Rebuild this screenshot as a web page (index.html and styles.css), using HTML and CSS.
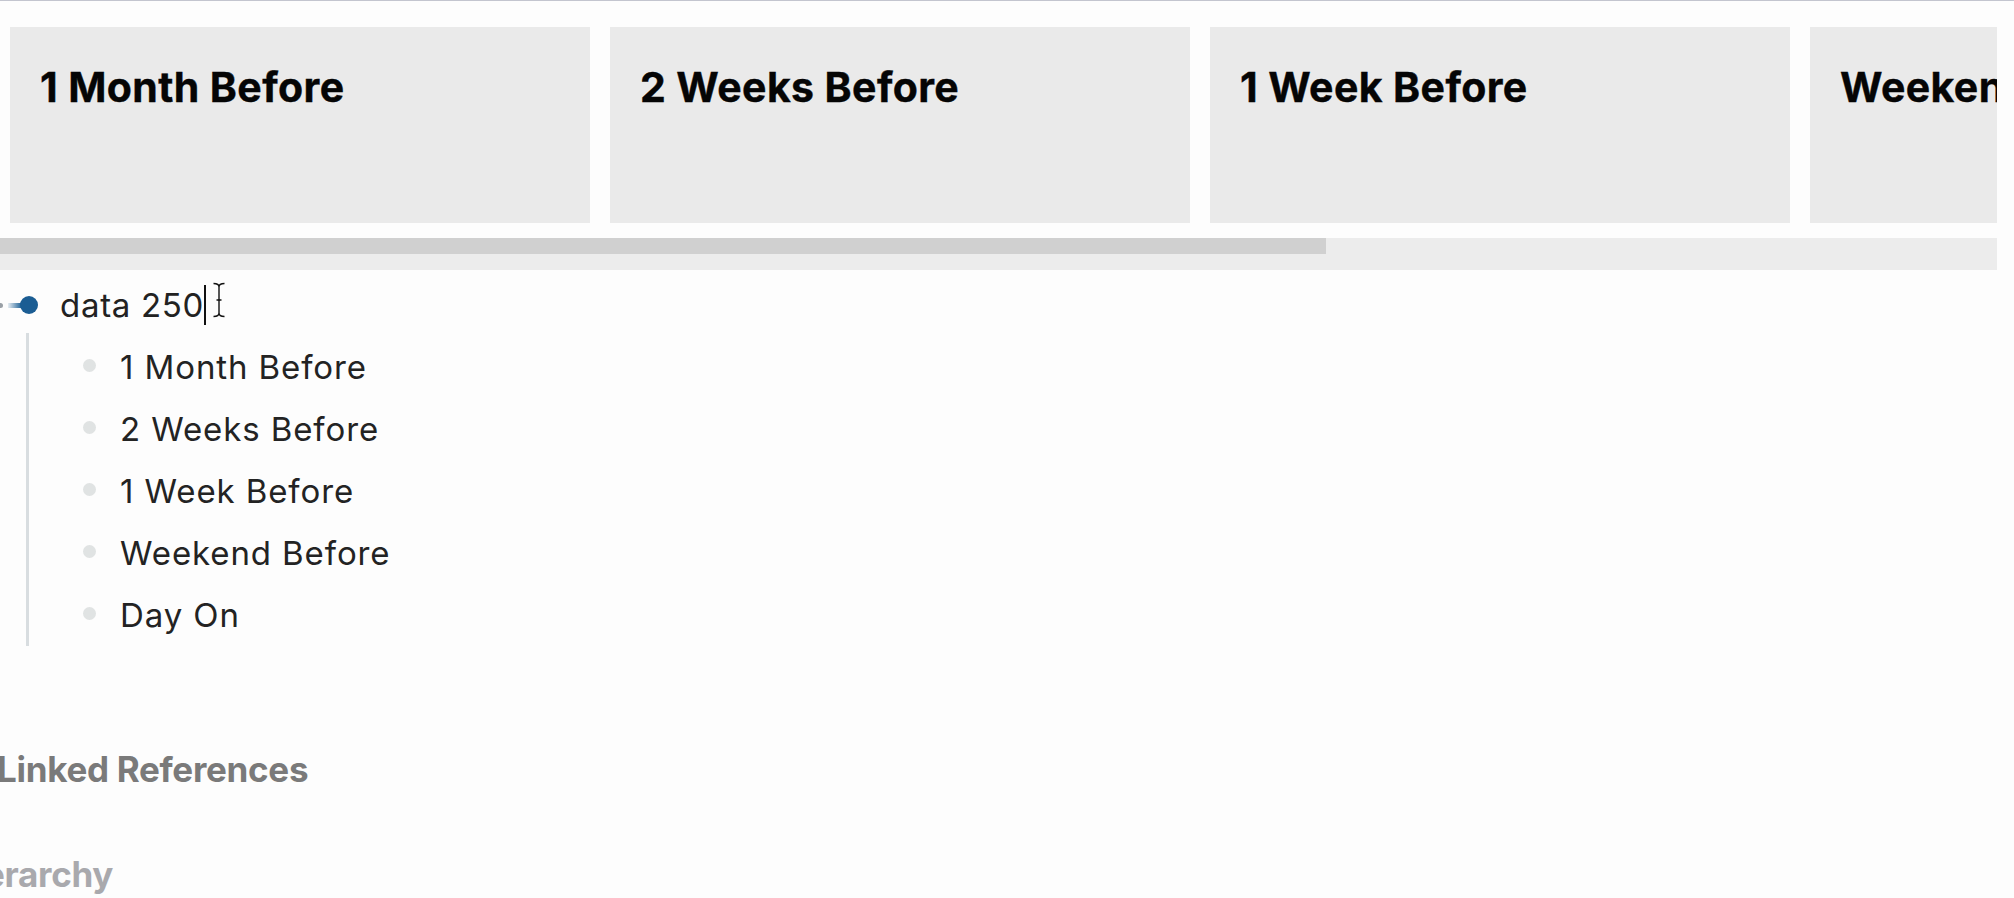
FILE: index.html
```html
<!DOCTYPE html>
<html>
<head>
<meta charset="utf-8">
<link rel="stylesheet" href="styles.css">
</head>
<body>
<div class="page">
  <div class="board">
    <div class="card"><h2 class="card-title">1 Month Before</h2></div>
    <div class="card"><h2 class="card-title">2 Weeks Before</h2></div>
    <div class="card"><h2 class="card-title">1 Week Before</h2></div>
    <div class="card"><h2 class="card-title">Weekend Before</h2></div>
    <div class="card"><h2 class="card-title">Day On</h2></div>
  </div>
  <div class="scrolltrack"><div class="scrollthumb"></div></div>

  <div class="outline">
    <div class="block-row">
      <div class="main-bullet">
        <span class="prev-dot"></span>
        <span class="tail"></span>
        <span class="dot"></span>
      </div>
      <div class="block-text">data 250<span class="caret"></span><svg class="ibeam" width="14" height="36" viewBox="0 0 14 36"><path d="M1.5 1.5 C5 1.5 7 2.5 7 5 C7 2.5 9 1.5 12.5 1.5 M7 5 V31 M1.5 34.5 C5 34.5 7 33.5 7 31 C7 33.5 9 34.5 12.5 34.5 M4.5 18 H9.5" fill="none" stroke="#fff" stroke-width="3.2"/><path d="M1.5 1.5 C5 1.5 7 2.5 7 5 C7 2.5 9 1.5 12.5 1.5 M7 5 V31 M1.5 34.5 C5 34.5 7 33.5 7 31 C7 33.5 9 34.5 12.5 34.5 M4.5 18 H9.5" fill="none" stroke="#111" stroke-width="1.4"/></svg></div>
    </div>
    <div class="children">
      <div class="child-row"><span class="child-bullet"></span><span class="child-text">1 Month Before</span></div>
      <div class="child-row"><span class="child-bullet"></span><span class="child-text">2 Weeks Before</span></div>
      <div class="child-row"><span class="child-bullet"></span><span class="child-text">1 Week Before</span></div>
      <div class="child-row"><span class="child-bullet"></span><span class="child-text">Weekend Before</span></div>
      <div class="child-row"><span class="child-bullet"></span><span class="child-text">Day On</span></div>
    </div>
  </div>

  <div class="section-title linked">Linked References</div>
  <div class="section-title hierarchy">Hierarchy</div>
</div>
</body>
</html>
```
FILE: styles.css
```css
html, body {
  margin: 0;
  padding: 0;
}
body {
  width: 2014px;
  height: 898px;
  overflow: hidden;
  background: #fdfdfd;
  font-family: Inter, "Noto Sans", "Liberation Sans", sans-serif;
  color: #222;
}
.page {
  border-top: 1px solid #c3c5cf;
  height: 897px;
  overflow: hidden;
}
.board {
  width: 1987px;
  display: flex;
  gap: 20px;
  padding: 26px 0 15px 10px;
  overflow: hidden;
}
.card {
  flex: 0 0 580px;
  height: 196px;
  background: #eaeaea;
  box-sizing: border-box;
  padding: 35px 30px 0 30px;
}
.card-title {
  margin: 0;
  font-size: 41px;
  line-height: 50px;
  font-weight: 700;
  color: #050505;
  white-space: nowrap;
  letter-spacing: 0.4px;
  -webkit-text-stroke: 0.4px #050505;
}
.scrolltrack {
  width: 1997px;
  height: 32px;
  background: #ececec;
}
.scrollthumb {
  width: 1326px;
  height: 16px;
  background: #d0d0d0;
}
.outline {
  margin-top: 4px;
}
.block-row {
  display: flex;
  align-items: center;
  height: 62px;
}
.main-bullet {
  width: 60px;
  height: 62px;
  display: flex;
  align-items: center;
  flex: 0 0 60px;
}
.prev-dot {
  width: 5px;
  height: 5px;
  border-radius: 50%;
  background: #9aa0a6;
  margin-left: -2px;
}
.tail {
  width: 13px;
  height: 5px;
  margin-left: 5px;
  background: linear-gradient(to right, rgba(27, 94, 148, 0.1), rgba(27, 94, 148, 0.95));
}
.dot {
  width: 18px;
  height: 18px;
  border-radius: 50%;
  background: #1b5d93;
  margin-left: -1px;
}
.block-text {
  font-size: 33px;
  letter-spacing: 0.7px;
  line-height: 62px;
  color: #222;
  display: flex;
  align-items: center;
  white-space: nowrap;
}
.caret {
  width: 2px;
  height: 40px;
  background: #111;
}
.ibeam {
  margin-left: 6px;
  margin-top: -10px;
}
.children {
  margin-left: 26px;
  border-left: 3px solid #d8dde0;
  margin-top: -3px;
  padding-top: 3px;
  width: 600px;
}
.child-row {
  display: flex;
  align-items: center;
  height: 62px;
}
.child-bullet {
  width: 13px;
  height: 13px;
  border-radius: 50%;
  background: #e0e3e3;
  margin-left: 54px;
  margin-right: 24px;
  margin-top: -4px;
}
.child-text {
  font-size: 33px;
  letter-spacing: 0.9px;
  line-height: 62px;
  color: #232323;
  white-space: nowrap;
}
.section-title {
  font-size: 35px;
  line-height: 44px;
  font-weight: 700;
  white-space: nowrap;
  letter-spacing: -0.3px;
}
.linked {
  color: #7a7a7a;
  margin-top: 101px;
  margin-left: -3px;
}
.hierarchy {
  color: #a9a9ad;
  margin-top: 61px;
  margin-left: -51px;
}
```
